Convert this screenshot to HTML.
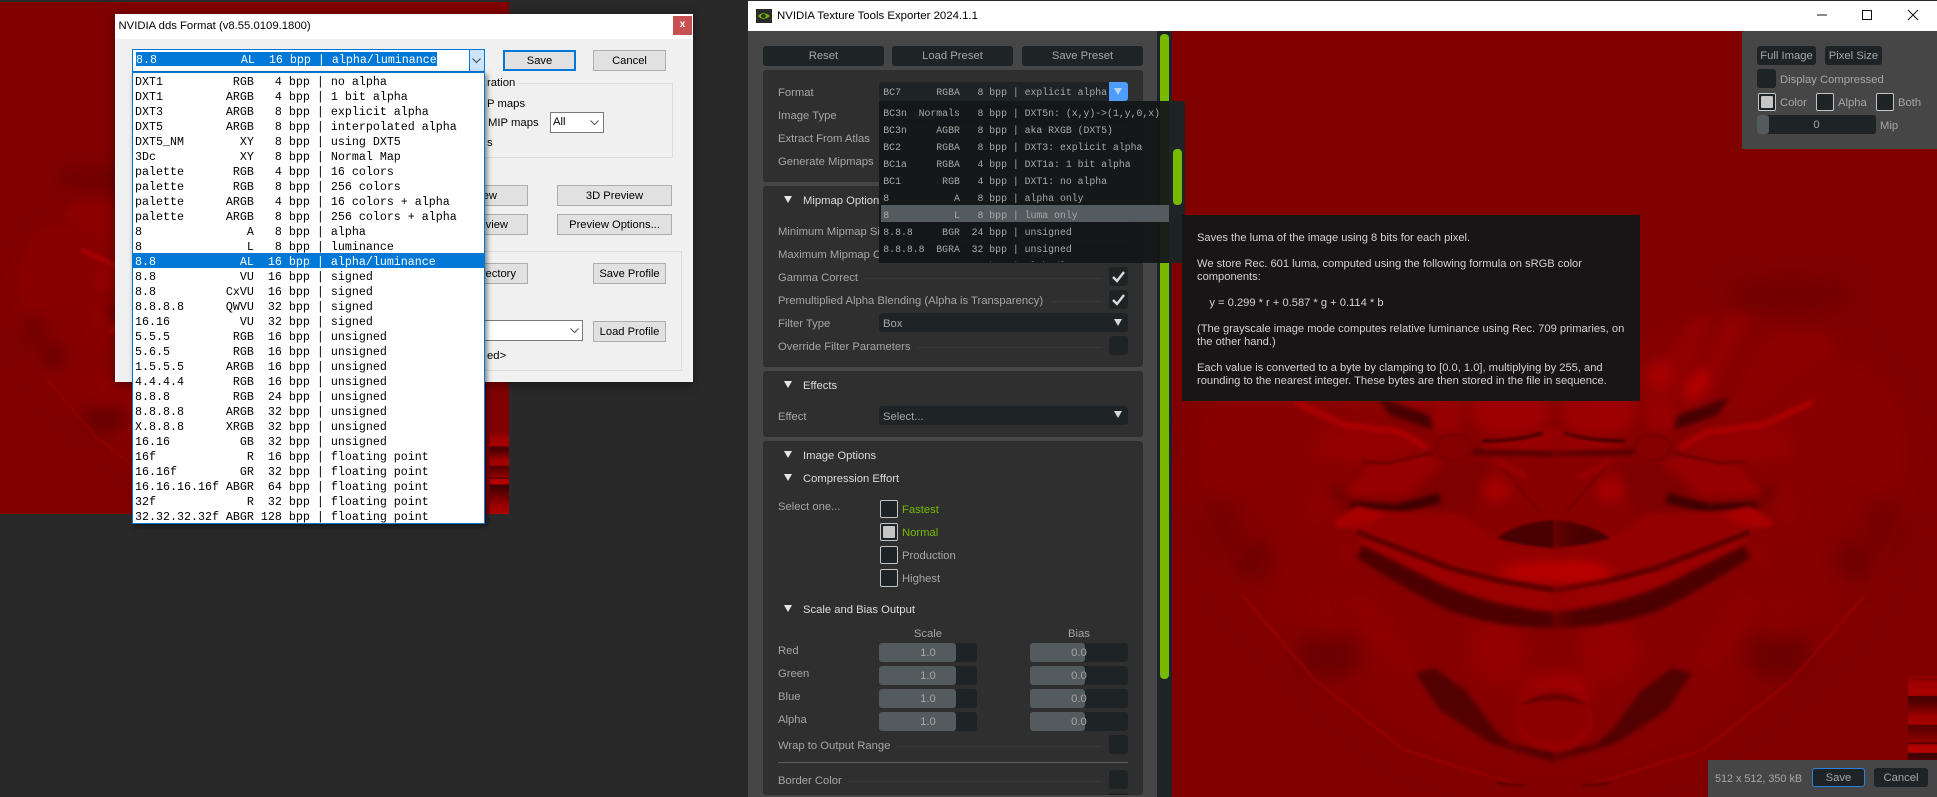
<!DOCTYPE html>
<html><head><meta charset="utf-8"><title>NVIDIA Texture Tools</title>
<style>
html,body{margin:0;padding:0;width:1937px;height:797px;overflow:hidden;background:#292929}
*{box-sizing:border-box}
div,span,pre{position:absolute}
span.i{position:static}
body{font-family:"Liberation Sans",sans-serif;font-size:11.2px}
.t{white-space:pre;line-height:18px;height:18px;color:#a6a6a6;font-size:11.25px}
.h{color:#dcdcdc}
.w{background:#1e2326;border-radius:3px}
.b{background:#1e2326;border-radius:3px;color:#a6a6a6;text-align:center;line-height:20px;font-size:11.25px;white-space:pre}
.r{background:#1e2326;border:1px solid #c4c4c4;border-radius:2px;width:18px;height:18px}
.f{background:#535b5e;border-radius:3px}
.line{background:#383838;height:1px}
.sec{background:#2f2f2f;border-radius:3px;left:763px;width:380px}
.tri{width:0;height:0;border-left:4.7px solid transparent;border-right:4.7px solid transparent;border-top:7.5px solid #e6e6e6}
.wb{background:#e1e1e1;border:1px solid #adadad;color:#000;text-align:center;font-size:11.2px;line-height:20px;white-space:pre;overflow:hidden}
.gb{border:1px solid #dcdcdc}
.d{color:#000;font-size:11.3px;white-space:pre;line-height:16px}
pre{margin:0}
.m1{font:11.67px/15px "Liberation Mono",monospace;color:#000}
.m2{font:9.82px/17px "Liberation Mono",monospace;color:#a8a8a8}
.tip{left:1197px;top:232px;font-size:11.15px;line-height:13px;color:#d2d2d2;white-space:pre;font-family:"Liberation Sans",sans-serif}
svg{position:absolute;display:block}
</style></head><body>

<svg width="0" height="0" style="left:0;top:0">
<defs>
<filter id="b1" filterUnits="userSpaceOnUse" x="1172" y="31" width="765" height="766"><feGaussianBlur stdDeviation="1"/></filter>
<filter id="b2" filterUnits="userSpaceOnUse" x="1172" y="31" width="765" height="766"><feGaussianBlur stdDeviation="2.5"/></filter>
<filter id="b4" filterUnits="userSpaceOnUse" x="1172" y="31" width="765" height="766"><feGaussianBlur stdDeviation="5"/></filter>
<filter id="b8" filterUnits="userSpaceOnUse" x="1172" y="31" width="765" height="766"><feGaussianBlur stdDeviation="10"/></filter>
<filter id="b14" filterUnits="userSpaceOnUse" x="1172" y="31" width="765" height="766"><feGaussianBlur stdDeviation="16"/></filter>
<linearGradient id="strip" x1="0" y1="0" x2="0" y2="1">
<stop offset="0" stop-color="#a00000"/><stop offset=".02" stop-color="#800000"/><stop offset=".05" stop-color="#a00000"/><stop offset=".16" stop-color="#a80000"/><stop offset=".17" stop-color="#450000"/><stop offset=".22" stop-color="#550000"/><stop offset=".33" stop-color="#9c0000"/><stop offset=".4" stop-color="#a80000"/><stop offset=".405" stop-color="#550000"/><stop offset=".48" stop-color="#700000"/><stop offset=".54" stop-color="#900000"/><stop offset=".56" stop-color="#500000"/><stop offset=".57" stop-color="#b00000"/><stop offset=".63" stop-color="#b80000"/><stop offset=".64" stop-color="#3a0000"/><stop offset=".75" stop-color="#650000"/><stop offset=".9" stop-color="#9c0000"/><stop offset="1" stop-color="#b00000"/>
</linearGradient>
<g id="half">
<path fill="#860000" filter="url(#b14)" d="M1553 345L1640 325L1720 315L1840 350L1890 420L1905 490L1880 560L1855 600L1780 675L1700 740L1640 765L1553 785Z"/>
<ellipse cx="1790" cy="295" rx="62" ry="18" fill="#720000" filter="url(#b8)"/>
<ellipse cx="1855" cy="560" rx="20" ry="22" fill="#6e0000" filter="url(#b8)"/>
<ellipse cx="1885" cy="527" rx="22" ry="30" fill="#760000" filter="url(#b8)"/>
<ellipse cx="1778" cy="654" rx="32" ry="24" fill="#6a0000" filter="url(#b8)"/>
<ellipse cx="1789" cy="504" rx="18" ry="36" fill="#8c0000" filter="url(#b8)"/>
<ellipse cx="1778" cy="610" rx="18" ry="26" fill="#8c0000" filter="url(#b8)"/>
<ellipse cx="1610" cy="650" rx="30" ry="34" fill="#940000" filter="url(#b8)"/>
<path fill="#900000" filter="url(#b4)" d="M1640 395L1665 355L1697 315L1712 320L1690 380L1668 410Z"/>
<ellipse cx="1660" cy="375" rx="14" ry="14" fill="#a40000" filter="url(#b4)"/>
<path fill="#900000" filter="url(#b4)" d="M1675 408L1697 378L1725 315L1748 318L1735 350L1710 395L1695 410Z"/>
<ellipse cx="1697" cy="385" rx="10" ry="18" fill="#b00000" filter="url(#b4)" transform="rotate(35 1697 385)"/>
<path fill="#8c0000" filter="url(#b4)" d="M1717 417L1763 340L1780 330L1827 333L1840 353L1800 377L1757 417Z"/>
<path fill="#8a0000" filter="url(#b8)" d="M1683 447L1757 420L1797 380L1857 363L1893 390L1908 440L1900 490L1807 473L1707 460Z"/>
<path fill="#920000" filter="url(#b4)" d="M1680 448L1707 432L1763 425L1790 435L1790 460L1720 465Z"/>
<path fill="#960000" filter="url(#b2)" d="M1663 462L1683 455L1740 468L1763 495L1667 497Z"/>
<path fill="none" stroke="#b40000" stroke-width="5" filter="url(#b2)" d="M1680 448L1707 432L1763 425L1812 402"/>
<path fill="none" stroke="#700000" stroke-width="3" filter="url(#b1)" d="M1673 453L1720 463L1745 462"/>
<path fill="#960000" filter="url(#b4)" d="M1642 402L1672 397L1678 430L1650 435Z"/>
<path fill="#480000" filter="url(#b2)" d="M1673 430L1678 415L1730 397L1717 415L1683 427Z"/>
<ellipse cx="1597" cy="412" rx="40" ry="24" fill="#9c0000" filter="url(#b4)"/>
<path fill="#980000" filter="url(#b2)" d="M1553 427L1623 445L1623 452L1553 452Z"/>
<path fill="none" stroke="#480000" stroke-width="3.5" filter="url(#b1)" d="M1564 433Q1590 441 1625 441"/>
<path fill="none" stroke="#4c0000" stroke-width="5" filter="url(#b2)" d="M1553 454L1635 452"/>
<path fill="#880000" filter="url(#b2)" d="M1553 458L1615 458L1630 500L1638 525L1600 542L1553 548Z"/>
<path fill="#7e0000" filter="url(#b4)" d="M1618 460L1660 462L1700 495L1672 513L1635 513Z"/>
<path fill="none" stroke="#700000" stroke-width="2" filter="url(#b1)" d="M1613 458L1567 512"/>
<path fill="none" stroke="#a40000" stroke-width="4" filter="url(#b2)" d="M1580 477L1613 460"/>
<ellipse cx="1610" cy="490" rx="14" ry="12" fill="#a40000" filter="url(#b4)"/>
<ellipse cx="1653" cy="447" rx="18" ry="13" fill="#850000" stroke="#6c0000" stroke-width="1.2" filter="url(#b1)"/>
<path fill="none" stroke="#3e0000" stroke-width="10" filter="url(#b2)" d="M1667 498L1710 509L1757 506"/>
<path fill="none" stroke="#6c0000" stroke-width="8" filter="url(#b4)" d="M1757 506L1775 487"/>
<path fill="#940000" filter="url(#b2)" d="M1553 548L1600 544L1628 528L1645 515L1750 509L1773 523L1745 535Q1680 572 1553 590Z"/>
<path fill="#a80000" filter="url(#b2)" d="M1722 514L1750 506L1773 522L1768 528L1735 523Z"/>
<path fill="#480000" filter="url(#b1)" d="M1553 520Q1590 523 1610 538Q1590 545 1553 548Z"/>
<ellipse cx="1553" cy="572" rx="55" ry="10" fill="#b80000" filter="url(#b4)"/>
<path fill="#9a0000" filter="url(#b2)" d="M1553 590L1610 582L1700 555L1750 535L1745 550L1690 585L1620 608L1553 616Z"/>
<path fill="none" stroke="#620000" stroke-width="6" filter="url(#b1)" d="M1750 532L1657 568L1607 581L1553 590"/>
<ellipse cx="1762" cy="552" rx="10" ry="20" fill="#8c0000" filter="url(#b4)"/>
<path fill="#4d0000" filter="url(#b2)" d="M1553 612Q1630 605 1690 572L1745 545L1750 558Q1700 590 1660 610Q1610 628 1553 628Z"/>
<path fill="none" stroke="#960000" stroke-width="14" filter="url(#b8)" d="M1750 595L1720 642L1700 668"/>
<path fill="#520000" filter="url(#b2)" d="M1553 762L1617 743L1667 710L1692 673L1672 668L1640 692L1612 730L1595 745L1553 750Z"/>
<ellipse cx="1553" cy="690" rx="36" ry="12" fill="#a40000" filter="url(#b8)"/>
<ellipse cx="1553" cy="720" rx="38" ry="31" fill="#960000" filter="url(#b2)"/>
<ellipse cx="1553" cy="716" rx="35" ry="27" fill="#8c0000" filter="url(#b2)"/>
<path fill="#680000" filter="url(#b1)" d="M1518 706Q1553 682 1588 706Q1553 694 1518 706Z"/>
<path fill="none" stroke="#a40000" stroke-width="1.4" filter="url(#b1)" d="M1865 595L1792 680L1755 709L1703 750L1583 787"/>
<path fill="none" stroke="#880000" stroke-width="1.5" filter="url(#b2)" d="M1865 595L1892 537L1913 490L1933 414"/>
<path fill="none" stroke="#400000" stroke-width="1.5" filter="url(#b1)" d="M1582 786L1610 783"/>
</g>
<g id="face">
<rect x="1172" y="31" width="765" height="766" fill="#800000"/>
<use href="#half"/>
<use href="#half" transform="translate(3107 0) scale(-1 1)"/>
<rect x="1908" y="676" width="29" height="121" fill="url(#strip)"/>
</g>
</defs>
</svg>

<!-- left image -->
<svg style="left:0;top:2px" width="509" height="512" viewBox="1172 31 765 766" preserveAspectRatio="none"><use href="#face"/></svg>

<!-- left dialog -->
<div style="left:115px;top:14px;width:578px;height:368px;background:#f0f0f0;box-shadow:0 2px 10px rgba(0,0,0,.45)"></div>
<div style="left:115px;top:14px;width:578px;height:25px;background:#fff"></div>
<div class="d" style="left:118.5px;top:18px">NVIDIA dds Format (v8.55.0109.1800)</div>
<div style="left:673px;top:16px;width:19px;height:19px;background:#c75050;color:#fff;text-align:center;font:bold 10px/18px 'Liberation Sans',sans-serif">x</div>

<div class="wb" style="left:503px;top:50px;width:73px;height:21px;border:2px solid #0078d7;line-height:18px">Save</div>
<div class="wb" style="left:593px;top:50px;width:73px;height:21px">Cancel</div>
<div class="gb" style="left:470px;top:83px;width:203px;height:75px"></div>
<div class="d" style="left:485px;top:75px;background:#f0f0f0;padding:0 2px 0 2px">ration</div>
<div class="d" style="left:487px;top:96px">P maps</div>
<div class="d" style="left:488px;top:115px">MIP maps</div>
<div class="d" style="left:550px;top:112px;width:54px;height:21px;background:#fff;border:1px solid #7a7a7a;padding-left:2px;line-height:18px">All</div>
<svg style="left:590px;top:120px" width="9" height="6"><path d="M.5 .5L4.5 4.5L8.5 .5" fill="none" stroke="#555" stroke-width="1"/></svg>
<div class="d" style="left:487px;top:135px">s</div>
<div class="wb" style="left:470px;top:185px;width:58px;height:21px;text-align:right;padding-right:30px">ew</div>
<div class="wb" style="left:557px;top:185px;width:115px;height:21px">3D Preview</div>
<div class="wb" style="left:470px;top:214px;width:58px;height:21px;text-align:right;padding-right:19px">eview</div>
<div class="wb" style="left:557px;top:214px;width:115px;height:21px">Preview Options...</div>
<div class="gb" style="left:470px;top:251px;width:212px;height:120px"></div>
<div class="wb" style="left:470px;top:263px;width:58px;height:21px;text-align:right;padding-right:11px">rectory</div>
<div class="wb" style="left:593px;top:263px;width:73px;height:21px">Save Profile</div>
<div style="left:470px;top:320px;width:113px;height:21px;background:#fff;border:1px solid #7a7a7a"></div>
<svg style="left:570px;top:328px" width="9" height="6"><path d="M.5 .5L4.5 4.5L8.5 .5" fill="none" stroke="#555" stroke-width="1"/></svg>
<div class="wb" style="left:593px;top:321px;width:73px;height:21px">Load Profile</div>
<div class="d" style="left:487px;top:348px">ed&gt;</div>

<!-- left combo + list -->
<div style="left:132px;top:49px;width:353px;height:23px;background:#fff;border:1px solid #0078d7"></div>
<div style="left:136px;top:52px;width:301px;height:14px;background:#0078d7"></div>
<pre class="m1" style="left:136px;top:53px;color:#fff;line-height:15px">8.8            AL  16 bpp | alpha/luminance</pre>
<div style="left:469px;top:50px;width:15px;height:21px;background:#cce4f7;border-left:1px solid #0078d7"></div>
<svg style="left:472px;top:58px" width="9" height="6"><path d="M.5 .5L4.5 4.5L8.5 .5" fill="none" stroke="#444" stroke-width="1"/></svg>
<div style="left:132px;top:72px;width:353px;height:452px;background:#fff;border:1px solid #0078d7;box-shadow:2px 2px 5px rgba(0,0,0,.5)"></div>
<div style="left:133px;top:253px;width:351px;height:15px;background:#0078d7"></div>
<pre class="m1" style="left:135px;top:74.5px">DXT1          RGB   4 bpp | no alpha
DXT1         ARGB   4 bpp | 1 bit alpha
DXT3         ARGB   8 bpp | explicit alpha
DXT5         ARGB   8 bpp | interpolated alpha
DXT5_NM        XY   8 bpp | using DXT5
3Dc            XY   8 bpp | Normal Map
palette       RGB   4 bpp | 16 colors
palette       RGB   8 bpp | 256 colors
palette      ARGB   4 bpp | 16 colors + alpha
palette      ARGB   8 bpp | 256 colors + alpha
8               A   8 bpp | alpha
8               L   8 bpp | luminance
<span class="i" style="color:#fff">8.8            AL  16 bpp | alpha/luminance</span>
8.8            VU  16 bpp | signed
8.8          CxVU  16 bpp | signed
8.8.8.8      QWVU  32 bpp | signed
16.16          VU  32 bpp | signed
5.5.5         RGB  16 bpp | unsigned
5.6.5         RGB  16 bpp | unsigned
1.5.5.5      ARGB  16 bpp | unsigned
4.4.4.4       RGB  16 bpp | unsigned
8.8.8         RGB  24 bpp | unsigned
8.8.8.8      ARGB  32 bpp | unsigned
X.8.8.8      XRGB  32 bpp | unsigned
16.16          GB  32 bpp | unsigned
16f             R  16 bpp | floating point
16.16f         GR  32 bpp | floating point
16.16.16.16f ABGR  64 bpp | floating point
32f             R  32 bpp | floating point
32.32.32.32f ABGR 128 bpp | floating point</pre>

<!-- right window -->
<div style="left:748px;top:1px;width:1189px;height:30px;background:#fff"></div>
<svg style="left:756px;top:9px" width="16" height="14" viewBox="0 0 16 14"><rect width="16" height="14" fill="#2a2a2a"/><path d="M2 7Q7 1.5 14 7Q7 12.5 2 7Z" fill="#76b900"/><ellipse cx="7.5" cy="7" rx="2.5" ry="2" fill="#2a2a2a"/></svg>
<div class="d" style="left:777px;top:8px;font-size:11.4px">NVIDIA Texture Tools Exporter 2024.1.1</div>
<svg style="left:1810px;top:5px" width="115" height="20"><path d="M7 10H17" stroke="#111" stroke-width="1"/><rect x="52.5" y="5.5" width="9" height="9" fill="none" stroke="#111"/><path d="M98 5L108 15M108 5L98 15" stroke="#111" stroke-width="1"/></svg>

<div style="left:748px;top:31px;width:409px;height:766px;background:#464646"></div>
<div style="left:1157px;top:31px;width:15px;height:766px;background:#1e2326"></div>
<div style="left:1160px;top:34px;width:9px;height:645px;background:#76b900;border-radius:4px"></div>

<!-- right image -->
<svg style="left:1172px;top:31px" width="765" height="766" viewBox="1172 31 765 766" preserveAspectRatio="none"><use href="#face"/></svg>

<!-- panel top buttons -->
<div class="b" style="left:763px;top:46px;width:121px;height:20px;line-height:21px">Reset</div>
<div class="b" style="left:892px;top:46px;width:121px;height:20px;line-height:21px">Load Preset</div>
<div class="b" style="left:1022px;top:46px;width:121px;height:20px;line-height:21px">Save Preset</div>

<div class="sec" style="top:70px;height:112px"></div>
<div class="sec" style="top:186px;height:181px"></div>
<div class="sec" style="top:371px;height:66px"></div>
<div class="sec" style="top:441px;height:354px"></div>

<div class="t" style="left:778px;top:84px">Format</div>
<div class="t" style="left:778px;top:107px">Image Type</div>
<div class="t" style="left:778px;top:130px">Extract From Atlas</div>
<div class="t" style="left:778px;top:153px">Generate Mipmaps</div>
<div class="w" style="left:879px;top:82px;width:249px;height:19px"></div>
<pre class="m2" style="left:883.3px;top:84px;line-height:17px">BC7      RGBA   8 bpp | explicit alpha</pre>
<div style="left:1109px;top:82px;width:19px;height:19px;background:#4d9cff;border-radius:0 3px 3px 0"></div>
<div class="tri" style="left:1114px;top:88px;border-top-color:#b9d3ee"></div>
<div class="w" style="left:879px;top:105px;width:249px;height:19px"></div>
<div class="t" style="left:883px;top:107px">Color Map</div>

<div class="tri" style="left:784px;top:196px"></div>
<div class="t h" style="left:803px;top:192px">Mipmap Options</div>
<div class="t" style="left:778px;top:223px">Minimum Mipmap Size</div>
<div class="t" style="left:778px;top:246px">Maximum Mipmap Count</div>
<div class="w" style="left:879px;top:221px;width:249px;height:19px"></div>
<div class="w" style="left:879px;top:244px;width:249px;height:19px"></div>
<div class="t" style="left:1031px;top:246px">MAX</div>

<div class="t" style="left:778px;top:269px">Gamma Correct</div>
<div class="line" style="left:865px;top:278px;width:237px"></div>
<div class="w" style="left:1109px;top:267px;width:19px;height:19px"></div>
<svg style="left:1109px;top:267px" width="19" height="19"><path d="M4 10L8 14L15 5" fill="none" stroke="#dcdcdc" stroke-width="2.4"/></svg>
<div class="t" style="left:778px;top:292px">Premultiplied Alpha Blending (Alpha is Transparency)</div>
<div class="line" style="left:1052px;top:301px;width:50px"></div>
<div class="w" style="left:1109px;top:290px;width:19px;height:19px"></div>
<svg style="left:1109px;top:290px" width="19" height="19"><path d="M4 10L8 14L15 5" fill="none" stroke="#dcdcdc" stroke-width="2.4"/></svg>
<div class="t" style="left:778px;top:315px">Filter Type</div>
<div class="w" style="left:879px;top:313px;width:249px;height:19px"></div>
<div class="t" style="left:883px;top:315px">Box</div>
<div class="tri" style="left:1114px;top:319px;border-top-color:#d8d8d8"></div>
<div class="t" style="left:778px;top:338px">Override Filter Parameters</div>
<div class="line" style="left:917px;top:347px;width:185px"></div>
<div class="w" style="left:1109px;top:336px;width:19px;height:19px"></div>

<div class="tri" style="left:784px;top:381px"></div>
<div class="t h" style="left:803px;top:377px">Effects</div>
<div class="t" style="left:778px;top:408px">Effect</div>
<div class="w" style="left:879px;top:406px;width:249px;height:19px"></div>
<div class="t" style="left:883px;top:408px">Select...</div>
<div class="tri" style="left:1114px;top:411px;border-top-color:#d8d8d8"></div>

<div class="tri" style="left:784px;top:451px"></div>
<div class="t h" style="left:803px;top:447px">Image Options</div>
<div class="tri" style="left:784px;top:474px"></div>
<div class="t h" style="left:803px;top:470px">Compression Effort</div>
<div class="t" style="left:778px;top:498px">Select one...</div>
<div class="r" style="left:880px;top:500px"></div>
<div class="r" style="left:880px;top:523px"></div>
<div style="left:883px;top:526px;width:12px;height:12px;background:#c4c4c4;border-radius:1px"></div>
<div class="r" style="left:880px;top:546px"></div>
<div class="r" style="left:880px;top:569px"></div>
<div class="t" style="left:902px;top:501px;color:#76b900">Fastest</div>
<div class="t" style="left:902px;top:524px;color:#76b900">Normal</div>
<div class="t" style="left:902px;top:547px">Production</div>
<div class="t" style="left:902px;top:570px">Highest</div>

<div class="tri" style="left:784px;top:605px"></div>
<div class="t h" style="left:803px;top:601px">Scale and Bias Output</div>
<div class="t" style="left:879px;width:98px;top:625px;text-align:center">Scale</div>
<div class="t" style="left:1030px;width:98px;top:625px;text-align:center">Bias</div>
<div class="t" style="left:778px;top:642px">Red</div>
<div class="t" style="left:778px;top:665px">Green</div>
<div class="t" style="left:778px;top:688px">Blue</div>
<div class="t" style="left:778px;top:711px">Alpha</div>

<div class="w" style="left:879px;top:643px;width:98px;height:19px"></div><div class="f" style="left:879px;top:643px;width:77px;height:19px"></div><div class="b" style="left:879px;top:643px;width:98px;height:19px;background:none">1.0</div>
<div class="w" style="left:879px;top:666px;width:98px;height:19px"></div><div class="f" style="left:879px;top:666px;width:77px;height:19px"></div><div class="b" style="left:879px;top:666px;width:98px;height:19px;background:none">1.0</div>
<div class="w" style="left:879px;top:689px;width:98px;height:19px"></div><div class="f" style="left:879px;top:689px;width:77px;height:19px"></div><div class="b" style="left:879px;top:689px;width:98px;height:19px;background:none">1.0</div>
<div class="w" style="left:879px;top:712px;width:98px;height:19px"></div><div class="f" style="left:879px;top:712px;width:77px;height:19px"></div><div class="b" style="left:879px;top:712px;width:98px;height:19px;background:none">1.0</div>
<div class="w" style="left:1030px;top:643px;width:98px;height:19px"></div><div class="f" style="left:1030px;top:643px;width:55px;height:19px"></div><div class="b" style="left:1030px;top:643px;width:98px;height:19px;background:none">0.0</div>
<div class="w" style="left:1030px;top:666px;width:98px;height:19px"></div><div class="f" style="left:1030px;top:666px;width:55px;height:19px"></div><div class="b" style="left:1030px;top:666px;width:98px;height:19px;background:none">0.0</div>
<div class="w" style="left:1030px;top:689px;width:98px;height:19px"></div><div class="f" style="left:1030px;top:689px;width:55px;height:19px"></div><div class="b" style="left:1030px;top:689px;width:98px;height:19px;background:none">0.0</div>
<div class="w" style="left:1030px;top:712px;width:98px;height:19px"></div><div class="f" style="left:1030px;top:712px;width:55px;height:19px"></div><div class="b" style="left:1030px;top:712px;width:98px;height:19px;background:none">0.0</div>

<div class="t" style="left:778px;top:737px">Wrap to Output Range</div>
<div class="line" style="left:896px;top:746px;width:206px"></div>
<div class="w" style="left:1109px;top:735px;width:19px;height:19px"></div>
<div style="left:778px;top:762px;width:350px;height:1px;background:#5c5c5c"></div>
<div class="t" style="left:778px;top:772px">Border Color</div>
<div class="line" style="left:849px;top:781px;width:253px"></div>
<div class="w" style="left:1109px;top:770px;width:19px;height:19px"></div>
<div class="w" style="left:1109px;top:793px;width:19px;height:2px;border-radius:3px 3px 0 0"></div>

<!-- dropdown popup -->
<div style="left:879px;top:101px;width:306px;height:162px;background:rgba(20,23,24,.95)"></div>
<div style="left:1169px;top:101px;width:16px;height:162px;background:#1e2326"></div>
<div style="left:1173px;top:149px;width:9px;height:56px;background:#76b900;border-radius:4px"></div>
<div style="left:881px;top:205px;width:288px;height:17px;background:#535b5e"></div>
<div style="left:879px;top:101px;width:290px;height:161px;overflow:hidden">
<pre class="m2" style="left:4.3px;top:3.5px">BC3n  Normals   8 bpp | DXT5n: (x,y)-&gt;(1,y,0,x)
BC3n     AGBR   8 bpp | aka RXGB (DXT5)
BC2      RGBA   8 bpp | DXT3: explicit alpha
BC1a     RGBA   4 bpp | DXT1a: 1 bit alpha
BC1       RGB   4 bpp | DXT1: no alpha
8           A   8 bpp | alpha only
8           L   8 bpp | luma only
8.8.8     BGR  24 bpp | unsigned
8.8.8.8  BGRA  32 bpp | unsigned
8.8        AL  16 bpp | alpha/luma</pre>
</div>

<!-- tooltip -->
<div style="left:1182px;top:215px;width:458px;height:186px;background:#191516"></div>
<pre class="tip">Saves the luma of the image using 8 bits for each pixel.

We store Rec. 601 luma, computed using the following formula on sRGB color
components:

    y = 0.299 * r + 0.587 * g + 0.114 * b

(The grayscale image mode computes relative luminance using Rec. 709 primaries, on
the other hand.)

Each value is converted to a byte by clamping to [0.0, 1.0], multiplying by 255, and
rounding to the nearest integer. These bytes are then stored in the file in sequence.</pre>

<!-- viewer top-right panel -->
<div style="left:1742px;top:31px;width:195px;height:118px;background:#464646"></div>
<div class="b" style="left:1757px;top:46px;width:59px;height:19px">Full Image</div>
<div class="b" style="left:1825px;top:46px;width:57px;height:19px">Pixel Size</div>
<div class="w" style="left:1757px;top:69px;width:19px;height:19px"></div>
<div class="t" style="left:1780px;top:71px">Display Compressed</div>
<div class="r" style="left:1758px;top:93px"></div>
<div style="left:1761px;top:96px;width:12px;height:12px;background:#c4c4c4;border-radius:1px"></div>
<div class="t" style="left:1780px;top:94px">Color</div>
<div class="r" style="left:1816px;top:93px"></div>
<div class="t" style="left:1838px;top:94px">Alpha</div>
<div class="r" style="left:1876px;top:93px"></div>
<div class="t" style="left:1898px;top:94px">Both</div>
<div class="w" style="left:1757px;top:115px;width:119px;height:19px"></div>
<div class="f" style="left:1757px;top:115px;width:12px;height:19px"></div>
<div class="b" style="left:1757px;top:115px;width:119px;height:19px;background:none">0</div>
<div class="t" style="left:1880px;top:117px">Mip</div>

<!-- viewer bottom-right panel -->
<div style="left:1708px;top:760px;width:229px;height:37px;background:#464646"></div>
<div class="t" style="left:1715px;top:770px;font-size:10.8px">512 x 512, 350 kB</div>
<div class="b" style="left:1812px;top:768px;width:53px;height:19px;border:1px solid #2b80e0;line-height:18px">Save</div>
<div class="b" style="left:1874px;top:768px;width:54px;height:19px">Cancel</div>
</body></html>
